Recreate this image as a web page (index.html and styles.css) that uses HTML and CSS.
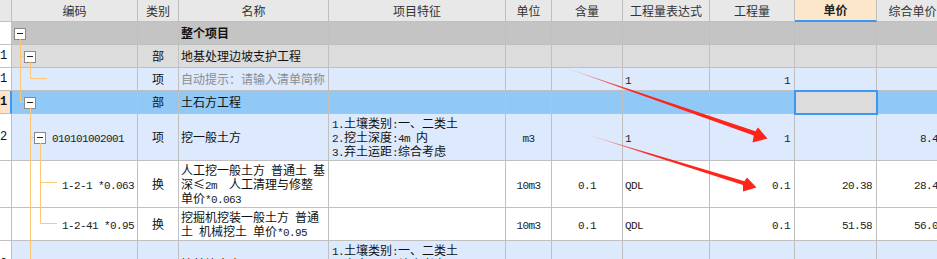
FILE: index.html
```html
<!DOCTYPE html>
<html lang="zh-CN">
<head>
    <meta charset="UTF-8">
    <title>分部分项</title>
    <link rel="stylesheet" href="styles.css">
</head>
<body>
    <div class="sheet">
        <table class="grid">
            <colgroup>
                <col class="w-no"><col class="w-code"><col class="w-kind"><col class="w-name"><col class="w-feat"><col class="w-unit">
                <col class="w-content"><col class="w-expr"><col class="w-qty"><col class="w-price"><col class="w-total">
            </colgroup>
            <thead>
                <tr>
                    <th class="no"></th>
                    <th>编码</th>
                    <th>类别</th>
                    <th>名称</th>
                    <th>项目特征</th>
                    <th>单位</th>
                    <th>含量</th>
                    <th>工程量表达式</th>
                    <th>工程量</th>
                    <th class="sorted">单价</th>
                    <th>综合单价</th>
                </tr>
            </thead>
            <tbody>
                <tr class="r-top h1">
                    <td class="no"></td>
                    <td class="code l0"><span class="tg"></span></td>
                    <td class="kind"></td>
                    <td class="name"><b>整个项目</b></td>
                    <td></td><td></td><td></td><td></td><td></td><td></td><td></td>
                </tr>
                <tr class="r-part h1">
                    <td class="no">1</td>
                    <td class="code l1"><span class="tg"></span></td>
                    <td class="kind">部</td>
                    <td class="name">地基处理边坡支护工程</td>
                    <td></td><td></td><td></td><td></td><td></td><td></td><td></td>
                </tr>
                <tr class="r-item h1">
                    <td class="no">1</td>
                    <td class="code"></td>
                    <td class="kind">项</td>
                    <td class="name hint">自动提示：请输入清单简称</td>
                    <td></td>
                    <td></td>
                    <td></td>
                    <td class="expr"><span class="a">1</span></td>
                    <td class="num"><span class="a">1</span></td>
                    <td></td>
                    <td></td>
                </tr>
                <tr class="r-sel h1">
                    <td class="no">1</td>
                    <td class="code l1"><span class="tg"></span></td>
                    <td class="kind">部</td>
                    <td class="name">土石方工程</td>
                    <td></td><td></td><td></td><td></td><td></td>
                    <td class="focus"></td>
                    <td></td>
                </tr>
                <tr class="r-item h2">
                    <td class="no">2</td>
                    <td class="code l2"><span class="tg"></span><span class="a">010101002001</span></td>
                    <td class="kind">项</td>
                    <td class="name">挖一般土方</td>
                    <td class="feat"><span class="a">1.</span>土壤类别<span class="a">:</span>一、二类土<br><span class="a">2.</span>挖土深度<span class="a">:4m </span>内<br><span class="a">3.</span>弃土运距<span class="a">:</span>综合考虑</td>
                    <td class="unit"><span class="a">m3</span></td>
                    <td class="unit"></td>
                    <td class="expr"><span class="a">1</span></td>
                    <td class="num"><span class="a">1</span></td>
                    <td class="num"></td>
                    <td class="num"><span class="a">8.43</span></td>
                </tr>
                <tr class="r-sub h2">
                    <td class="no"></td>
                    <td class="code l3"><span class="a">1-2-1 *0.063</span></td>
                    <td class="kind">换</td>
                    <td class="name">人工挖一般土方<span class="a"> </span>普通土<span class="a"> </span>基深≤<span class="a">2m&nbsp; </span>人工清理与修整<span class="a"> </span>单价<span class="a">*0.063</span></td>
                    <td class="feat"></td>
                    <td class="unit"><span class="a">10m3</span></td>
                    <td class="unit"><span class="a">0.1</span></td>
                    <td class="expr"><span class="a">QDL</span></td>
                    <td class="num"><span class="a">0.1</span></td>
                    <td class="num"><span class="a">20.38</span></td>
                    <td class="num"><span class="a">28.45</span></td>
                </tr>
                <tr class="r-sub h3">
                    <td class="no"></td>
                    <td class="code l3"><span class="a">1-2-41 *0.95</span></td>
                    <td class="kind">换</td>
                    <td class="name">挖掘机挖装一般土方<span class="a"> </span>普通土<span class="a"> </span>机械挖土<span class="a"> </span>单价<span class="a">*0.95</span></td>
                    <td class="feat"></td>
                    <td class="unit"><span class="a">10m3</span></td>
                    <td class="unit"><span class="a">0.1</span></td>
                    <td class="expr"><span class="a">QDL</span></td>
                    <td class="num"><span class="a">0.1</span></td>
                    <td class="num"><span class="a">51.58</span></td>
                    <td class="num"><span class="a">56.03</span></td>
                </tr>
                <tr class="r-item h2">
                    <td class="no">3</td>
                    <td class="code l2"><span class="tg"></span><span class="a">010101004001</span></td>
                    <td class="kind">项</td>
                    <td class="name">挖基坑土方</td>
                    <td class="feat"><span class="a">1.</span>土壤类别<span class="a">:</span>一、二类土<br><span class="a">2.</span>弃土运距<span class="a">:</span>综合考虑<br><span class="a">3.</span>挖土深度<span class="a">:2m </span>内</td>
                    <td class="unit"><span class="a">m3</span></td>
                    <td></td>
                    <td class="expr"><span class="a">1</span></td>
                    <td class="num"><span class="a">1</span></td>
                    <td></td>
                    <td></td>
                </tr>
            </tbody>
        </table>

        <!-- tree connector lines of the code column -->
        <svg class="tree" width="60" height="259" viewBox="0 0 60 259">
            <path d="M20.5 39V101.5H24M20.5 56.5H24M30.5 62V78.5H47M30.5 108V259M30.5 137.5H34M40.5 143V223.5H57M40.5 182.5H57" fill="none" stroke="#ffc674"/>
        </svg>

        <!-- red annotation arrows -->
        <svg class="marks" width="937" height="259" viewBox="0 0 937 259">
            <defs>
                <linearGradient id="fadeA" gradientUnits="userSpaceOnUse" x1="563" y1="67" x2="630" y2="90">
                    <stop offset="0" stop-color="#ff2419" stop-opacity="0.1"/>
                    <stop offset="1" stop-color="#ff2419"/>
                </linearGradient>
                <linearGradient id="fadeB" gradientUnits="userSpaceOnUse" x1="585" y1="134" x2="650" y2="154">
                    <stop offset="0" stop-color="#ff2419" stop-opacity="0.1"/>
                    <stop offset="1" stop-color="#ff2419"/>
                </linearGradient>
            </defs>
            <polygon points="563,67 755.4,131.2 758,127.5 767.5,138.5 752.5,142.5 753.8,135.4" fill="url(#fadeA)"/>
            <polygon points="585,134 744.4,181.2 747,177.5 756.5,187.5 743,191.5 743,185.1" fill="url(#fadeB)"/>
        </svg>
    </div>
</body>
</html>
```

FILE: styles.css
```css
* {
    margin: 0;
    padding: 0;
    box-sizing: border-box;
}

body {
    font-family: "Noto Sans CJK SC", sans-serif;
    font-size: 12px;
    color: #111;
    background: #fff;
    overflow: hidden;
}

.sheet {
    position: relative;
    width: 937px;
    height: 259px;
    overflow: hidden;
}

.grid {
    border-collapse: separate;
    border-spacing: 0;
    table-layout: fixed;
    width: 949px;
}

.w-no { width: 12px; }
.w-code { width: 126px; }
.w-kind { width: 41px; }
.w-name { width: 150px; }
.w-feat { width: 177px; }
.w-unit { width: 46px; }
.w-content { width: 71px; }
.w-expr { width: 87px; }
.w-qty { width: 85px; }
.w-price { width: 82px; }
.w-total { width: 72px; }

.grid th,
.grid td {
    border-right: 1px solid #c0c0c0;
    border-bottom: 1px solid #c0c0c0;
    padding: 0 2px;
    line-height: 14px;
    vertical-align: middle;
    white-space: nowrap;
    overflow: hidden;
}

.grid th {
    height: 22px;
    background: #e8e8e8;
    color: #333;
    font-weight: normal;
    text-align: center;
}

.grid th.sorted {
    background: #fde7cb;
    border-bottom: 2px solid #3d97f3;
    font-weight: bold;
    color: #222;
}

.h1 td { height: 23px; }
.h2 td { height: 47px; }
.h3 td { height: 33px; }

/* ascii runs use a half-width monospace like the desktop grid */
.a {
    font-family: "Liberation Mono", monospace;
    font-size: 11px;
    letter-spacing: -0.6px;
    line-height: 0;
    color: #222;
}

.grid td.no {
    background: #fff;
    font-family: "Liberation Mono", monospace;
    font-size: 12px;
    text-align: right;
    padding: 0 5px 0 0;
}

.r-top td { background: #c4c4c4; }
.r-part td { background: #dcdcdc; }
.r-item td { background: #dde9fc; }
.r-sel td { background: #90c8f6; }
.r-sub td { background: #fff; }

.grid .r-sel td.no {
    background: #fde4c8;
    font-weight: bold;
    border-right: 2px solid #3d97f3;
}

.grid td.focus {
    background: #dcdcdc;
    outline: 2px solid #3d97f3;
    outline-offset: -1px;
}

.code.l0 { padding-left: 2px; }
.code.l1 { padding-left: 12px; }
.code.l2 { padding-left: 22px; }
.code.l3 { padding-left: 50px; }

.tg {
    display: inline-block;
    position: relative;
    width: 12px;
    height: 12px;
    margin-right: 6px;
    border: 1px solid #8a8a8a;
    background: #fff;
    vertical-align: middle;
}

.tg::after {
    content: "";
    position: absolute;
    left: 2px;
    top: 4px;
    width: 6px;
    height: 1px;
    background: #222;
}

.kind,
.unit {
    text-align: center;
}

.grid td.name {
    white-space: normal;
}

.hint {
    color: #8c8c8c;
}

.grid td.feat {
    padding-left: 3px;
}

.grid td.num {
    text-align: right;
    padding-right: 4px;
}

.tree,
.marks {
    position: absolute;
    top: 0;
    left: 0;
    pointer-events: none;
}
```
